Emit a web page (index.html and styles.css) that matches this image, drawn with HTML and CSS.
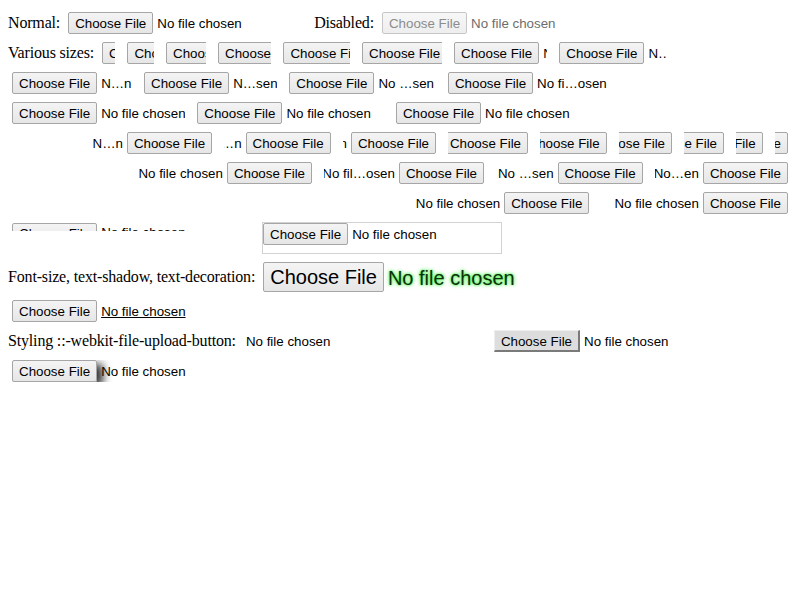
FILE: index.html
```html
<!DOCTYPE html>
<html>
<head>
<meta charset="utf-8">
<link rel="stylesheet" href="styles.css">
</head>
<body>
<div class="page">
  <div class="row">
    <span class="label">Normal:</span>
    <div class="fi"><span class="btn">Choose File</span><span class="txt">No file chosen</span></div>
    <span class="label">Disabled:</span>
    <div class="fi disabled"><span class="btn">Choose File</span><span class="txt">No file chosen</span></div>
  </div>

  <div class="row wrap">
    <span class="label">Various sizes:</span>
    <div class="fi w1"><span class="btn">Choose File</span><span class="txt">N…n</span></div>
    <div class="fi w2"><span class="btn">Choose File</span><span class="txt">N…n</span></div>
    <div class="fi w3"><span class="btn">Choose File</span><span class="txt">N…n</span></div>
    <div class="fi w4"><span class="btn">Choose File</span><span class="txt">N…n</span></div>
    <div class="fi w5"><span class="btn">Choose File</span><span class="txt">N…n</span></div>
    <div class="fi w6"><span class="btn">Choose File</span><span class="txt">N…n</span></div>
    <div class="fi w7"><span class="btn">Choose File</span><span class="txt">N…n</span></div>
    <div class="fi w8"><span class="btn">Choose File</span><span class="txt">N…n</span></div>
    <div class="fi w9"><span class="btn">Choose File</span><span class="txt">N…n</span></div>
    <div class="fi w10"><span class="btn">Choose File</span><span class="txt">N…sen</span></div>
    <div class="fi w11"><span class="btn">Choose File</span><span class="txt">No …sen</span></div>
    <div class="fi w12"><span class="btn">Choose File</span><span class="txt">No fi…osen</span></div>
    <div class="fi w13"><span class="btn">Choose File</span><span class="txt">No file chosen</span></div>
    <div class="fi w14"><span class="btn">Choose File</span><span class="txt">No file chosen</span></div>
    <div class="fi w15"><span class="btn">Choose File</span><span class="txt">No file chosen</span></div>
  </div>

  <div class="row wrap rtl">
    <div class="fi rev w1"><span class="btn">Choose File</span><span class="txt">N…n</span></div>
    <div class="fi rev w2"><span class="btn">Choose File</span><span class="txt">N…n</span></div>
    <div class="fi rev w3"><span class="btn">Choose File</span><span class="txt">N…n</span></div>
    <div class="fi rev w4"><span class="btn">Choose File</span><span class="txt">N…n</span></div>
    <div class="fi rev w5"><span class="btn">Choose File</span><span class="txt">N…n</span></div>
    <div class="fi rev w6"><span class="btn">Choose File</span><span class="txt">N…n</span></div>
    <div class="fi rev w7"><span class="btn">Choose File</span><span class="txt">N…n</span></div>
    <div class="fi rev w8"><span class="btn">Choose File</span><span class="txt">N…n</span></div>
    <div class="fi rev w9"><span class="btn">Choose File</span><span class="txt">N…n</span></div>
    <div class="fi rev w10"><span class="btn">Choose File</span><span class="txt">No…en</span></div>
    <div class="fi rev w11"><span class="btn">Choose File</span><span class="txt">No …sen</span></div>
    <div class="fi rev w12"><span class="btn">Choose File</span><span class="txt">No fil…osen</span></div>
    <div class="fi rev w13"><span class="btn">Choose File</span><span class="txt">No file chosen</span></div>
    <div class="fi rev w14"><span class="btn">Choose File</span><span class="txt">No file chosen</span></div>
    <div class="fi rev w15"><span class="btn">Choose File</span><span class="txt">No file chosen</span></div>
  </div>

  <div class="row top">
    <div class="fi short"><span class="btn">Choose File</span><span class="txt">No file chosen</span></div>
    <div class="fi tall"><span class="btn">Choose File</span><span class="txt">No file chosen</span></div>
  </div>

  <div class="row">
    <span class="label">Font-size, text-shadow, text-decoration:</span>
    <div class="fi big"><span class="btn">Choose File</span><span class="txt glow">No file chosen</span></div>
  </div>

  <div class="row">
    <div class="fi"><span class="btn">Choose File</span><span class="txt under">No file chosen</span></div>
  </div>

  <div class="row">
    <span class="label">Styling ::-webkit-file-upload-button:</span>
    <div class="fi nobtn"><span class="txt">No file chosen</span></div>
    <div class="fi"><span class="btn outset">Choose File</span><span class="txt">No file chosen</span></div>
  </div>

  <div class="row">
    <div class="fi"><span class="btn shadow">Choose File</span><span class="txt">No file chosen</span></div>
  </div>
</div>
</body>
</html>
```

FILE: styles.css
```css
html, body {
  background: #ffffff;
}
body {
  margin: 8px;
  font-family: "Liberation Serif", serif;
  font-size: 16px;
  color: #000;
}
.page {
  display: flex;
  flex-direction: column;
  align-items: flex-start;
}
.row {
  display: flex;
  align-items: center;
  column-gap: 4px;
  width: 784px;
}
.row.wrap {
  flex-wrap: wrap;
}
.row.rtl {
  flex-direction: row-reverse;
}
.row.top {
  align-items: flex-start;
}
.label {
  white-space: nowrap;
  flex-shrink: 0;
  letter-spacing: -0.17px;
}
.fi {
  display: flex;
  align-items: center;
  gap: 4px;
  width: 238px;
  height: 22px;
  margin: 4px;
  overflow: hidden;
  white-space: nowrap;
  flex-shrink: 0;
  font-family: "Liberation Sans", Arial, sans-serif;
  font-size: 13.333px;
  box-sizing: border-box;
}
.fi.rev {
  flex-direction: row-reverse;
}
.btn {
  flex-shrink: 0;
  box-sizing: border-box;
  height: 22px;
  line-height: 21px;
  padding: 0 6px;
  border: 1px solid #a6a6a6;
  border-radius: 2px;
  background: linear-gradient(#f4f4f4, #e6e6e6);
  color: #000;
}
.txt {
  flex-shrink: 0;
  line-height: 22px;
  padding-top: 1px;
}
.disabled .btn {
  color: #8c8c8c;
  border-color: #c6c6c6;
  background: linear-gradient(#f7f7f7, #eeeeee);
}
.disabled .txt {
  color: #6d6d6d;
}
.w1 { width: 13.333px; }
.w2 { width: 26.667px; }
.w3 { width: 40px; }
.w4 { width: 53.333px; }
.w5 { width: 66.667px; }
.w6 { width: 80px; }
.w7 { width: 93.333px; }
.w8 { width: 106.667px; }
.w9 { width: 120px; }
.w10 { width: 133.333px; }
.w11 { width: 146.667px; }
.w12 { width: 160px; }
.w13 { width: 173.333px; }
.w14 { width: 186.667px; }
.w15 { width: 200px; }

.fi.short {
  height: 8px;
  margin-top: 5px;
  align-items: flex-start;
}
.fi.short .btn {
  line-height: 19px;
}
.fi.short .txt {
  line-height: 20px;
  padding-top: 0;
}
.fi.tall {
  width: 240px;
  height: 32px;
  border: 1px solid #d2d2d2;
  align-items: flex-start;
}
.fi.big {
  font-size: 20px;
  height: 30px;
  width: 357px;
}
.fi.big .btn {
  height: 30px;
  line-height: 29px;
}
.fi.big .txt {
  line-height: 30px;
}
.glow {
  color: #0f2f0f;
  text-shadow: 0 0 2px #33ee33, 0 0 4px #33ee33;
}
.under {
  text-decoration: underline;
}
.fi.nobtn {
  padding-left: 2px;
}
.btn.outset {
  background: #dddddd;
  border-radius: 0;
  border-style: solid;
  border-width: 1px 2px 2px 1px;
  border-color: #eeeeee #7a7a7a #7a7a7a #eeeeee;
}
.btn.shadow {
  box-shadow: 6px 4px 8px #333333;
}
```
